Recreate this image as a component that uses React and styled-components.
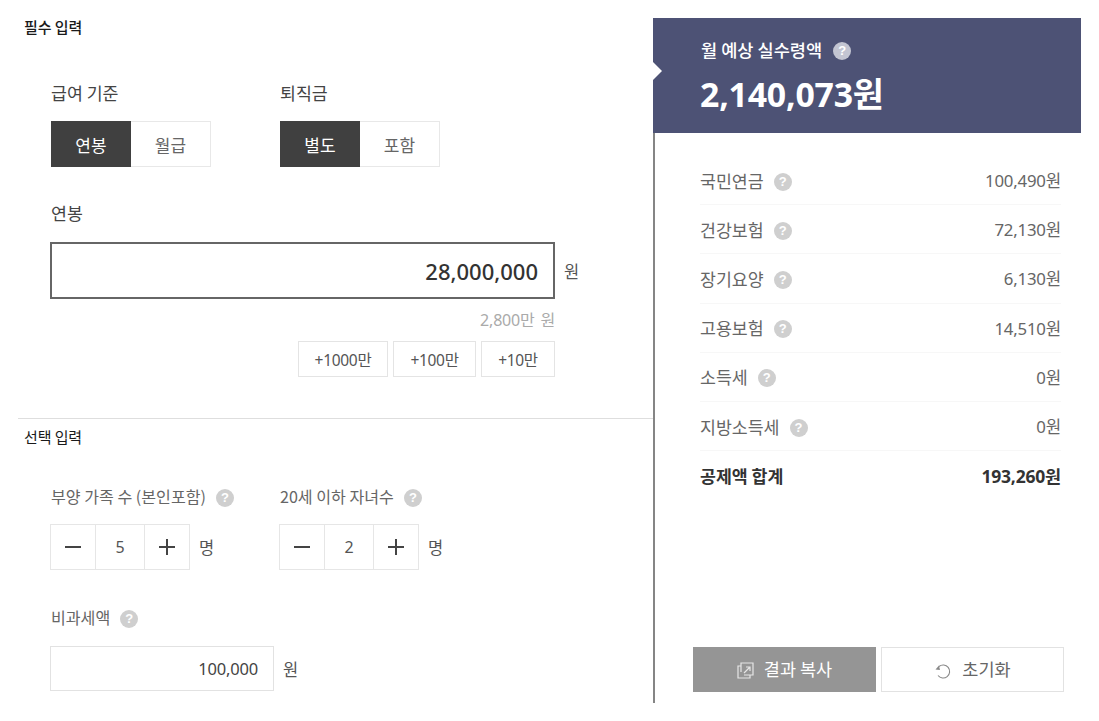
import React from "react";
import styled, { createGlobalStyle } from "styled-components";

const Global = createGlobalStyle`
  html, body { margin: 0; padding: 0; background: #fff; }
  body { font-family: "Noto Sans CJK KR", "Noto Sans", sans-serif; color: #333; }
  * { box-sizing: border-box; }
`;

const Page = styled.div`
  display: flex;
  width: 1099px;
  height: 721px;
  overflow: hidden;
  background: #fff;
`;

const Form = styled.div`
  width: 653px;
  flex: none;
  padding-left: 18px;
`;

const Section = styled.section`
  height: ${(p) => p.$height}px;
  border-bottom: ${(p) => (p.$divided ? "1px solid #dedede" : "none")};
  padding-top: ${(p) => p.$top}px;
`;

const SectionTitle = styled.h2`
  margin: 0 0 0 6px;
  font-size: 15px;
  line-height: 18px;
  font-weight: ${(p) => p.$weight || 500};
  color: #1a1a1a;
  letter-spacing: -0.1px;
`;

const Body = styled.div`
  padding-left: 33px;
  margin-top: ${(p) => p.$top}px;
`;

const Cols = styled.div`
  display: flex;
`;

const Col = styled.div`
  width: 229px;
`;

const Spacer = styled.div`
  height: ${(p) => p.$h}px;
`;

const Label = styled.div`
  display: flex;
  align-items: center;
  gap: ${(p) => p.$gap || 10}px;
  height: 20px;
  font-size: ${(p) => p.$size || 17.3}px;
  color: ${(p) => p.$color || "#444"};
  white-space: nowrap;
`;

const Help = styled.span`
  width: 18px;
  height: 18px;
  flex: none;
  margin-top: 3px;
  border-radius: 50%;
  background: ${(p) => p.$bg || "#cfcfcf"};
  color: #fff;
  font-family: "Liberation Sans", sans-serif;
  font-size: 13px;
  font-weight: 700;
  line-height: 18px;
  text-align: center;
`;

const Toggle = styled.div`
  display: flex;
  width: 160px;
  height: 46px;
  margin-top: 19px;
`;

const ToggleOption = styled.div`
  width: 80px;
  display: flex;
  align-items: center;
  justify-content: center;
  font-size: 17px;
  background: ${(p) => (p.$active ? "#404040" : "#fff")};
  color: ${(p) => (p.$active ? "#fff" : "#666")};
  border: ${(p) => (p.$active ? "none" : "1px solid #e8e8e8")};
  border-left: none;
`;

const FieldRow = styled.div`
  display: flex;
  align-items: center;
  gap: 9px;
  margin-left: -1px;
  margin-top: ${(p) => p.$top}px;
`;

const MainInput = styled.div`
  width: 505px;
  height: 57px;
  border: 2px solid #666;
  display: flex;
  align-items: center;
  justify-content: flex-end;
  padding-right: 15px;
  font-family: "Noto Sans", sans-serif;
  font-size: 22px;
  font-weight: 500;
  color: #333;
`;

const SmallInput = styled.div`
  width: 224px;
  height: 45px;
  border: 1px solid #e2e2e2;
  display: flex;
  align-items: center;
  justify-content: flex-end;
  padding-right: 15px;
  font-family: "Noto Sans", sans-serif;
  font-size: 16.5px;
  color: #444;
  letter-spacing: -0.2px;
`;

const Unit = styled.span`
  font-size: 16.5px;
  color: #555;
`;

const Hint = styled.div`
  width: 505px;
  margin: 11px 0 0 -1px;
  height: 20px;
  line-height: 20px;
  text-align: right;
  font-family: "Noto Sans", "Noto Sans CJK KR", sans-serif;
  font-size: 16px;
  color: #aaa;
  letter-spacing: -0.2px;
  word-spacing: 2px;
`;

const Quick = styled.div`
  width: 505px;
  display: flex;
  justify-content: flex-end;
  gap: 5px;
  margin: 11px 0 0 -1px;
`;

const QuickBtn = styled.div`
  width: ${(p) => p.$w}px;
  height: 36px;
  border: 1px solid #e4e4e4;
  display: flex;
  align-items: center;
  justify-content: center;
  font-family: "Noto Sans", "Noto Sans CJK KR", sans-serif;
  font-size: 15.5px;
  color: #555;
  letter-spacing: -0.3px;
`;

const Stepper = styled.div`
  display: flex;
  width: 140px;
  height: 46px;
  border: 1px solid #e6e6e6;
`;

const StepCell = styled.div`
  display: flex;
  align-items: center;
  justify-content: center;
  width: ${(p) => p.$w}px;
  border-left: ${(p) => (p.$sep ? "1px solid #e6e6e6" : "none")};
  font-family: "Noto Sans", sans-serif;
  font-size: 16px;
  color: #555;
`;

const Panel = styled.aside`
  width: 428px;
  height: 685px;
  margin-top: 18px;
  flex: none;
  display: flex;
  flex-direction: column;
  border-left: 2px solid #858585;
`;

const Hero = styled.div`
  position: relative;
  height: 115px;
  margin-left: -2px;
  background: #4d5275;
  color: #fff;
  padding: 21px 0 0 47px;
`;

const Notch = styled.span`
  position: absolute;
  left: 0;
  top: 44px;
  width: 0;
  height: 0;
  border-top: 9px solid transparent;
  border-bottom: 9px solid transparent;
  border-left: 9px solid #fff;
`;

const HeroLabel = styled.div`
  display: flex;
  align-items: center;
  gap: 11px;
  height: 20px;
  margin-left: 1px;
  font-size: 17.6px;
  font-weight: 500;
`;

const HeroValue = styled.div`
  margin-top: 13px;
  font-family: "Noto Sans", "Noto Sans CJK KR", sans-serif;
  font-size: 33.8px;
  line-height: 44px;
  font-weight: 700;
  letter-spacing: -0.2px;
`;

const Rows = styled.div`
  padding: 23px 20px 0 45px;
`;

const Row = styled.div`
  display: flex;
  align-items: center;
  justify-content: space-between;
  height: 49.2px;
  border-bottom: ${(p) => (p.$last ? "none" : "1px solid #f7f7f7")};
  font-size: 17.3px;
  color: ${(p) => (p.$strong ? "#333" : "#666")};
  font-weight: ${(p) => (p.$strong ? 700 : 400)};
`;

const RowValue = styled.span`
  font-family: "Noto Sans", "Noto Sans CJK KR", sans-serif;
  font-size: ${(p) => p.$size || 16.8}px;
  letter-spacing: -0.2px;
`;

const Actions = styled.div`
  margin-top: auto;
  margin-bottom: 11px;
  padding-left: 38px;
  display: flex;
  gap: 5px;
`;

const ActionBtn = styled.div`
  width: 183px;
  height: 45px;
  display: flex;
  align-items: center;
  justify-content: center;
  gap: 10px;
  padding-bottom: 3px;
  font-size: 17.5px;
  background: ${(p) => (p.$primary ? "#959595" : "#fff")};
  color: ${(p) => (p.$primary ? "#fff" : "#666")};
  border: ${(p) => (p.$primary ? "none" : "1px solid #e2e2e2")};
`;

const IconSlot = styled.span`
  display: flex;
  margin-top: 5px;
`;

const CopyIcon = () => (
  <IconSlot>
    <svg width="17" height="17" viewBox="0 0 17 17" fill="none" stroke="#e6e6e6" strokeWidth="1.2">
      <path d="M4 4H1v12h12v-3" />
      <path d="M4 10V1h12v12H7" />
      <path d="M7 11l6-6M9 5h4v4" />
    </svg>
  </IconSlot>
);

const UndoIcon = () => (
  <IconSlot>
    <svg width="18" height="18" viewBox="0 0 18 18" fill="none" stroke="#888" strokeWidth="1.1">
      <path d="M5 4.5A6.5 6.5 0 1 1 4 13.5" />
      <path d="M1.5 7.5L5 3.6l1 4.4z" fill="#888" stroke="none" />
    </svg>
  </IconSlot>
);

const MinusIcon = () => (
  <svg width="16" height="16" viewBox="0 0 16 16"><path d="M0 8h16" stroke="#444" strokeWidth="2" /></svg>
);

const PlusIcon = () => (
  <svg width="16" height="16" viewBox="0 0 16 16"><path d="M0 8h16M8 0v16" stroke="#444" strokeWidth="2" /></svg>
);

const StepperField = ({ value }) => (
  <FieldRow $top={18}>
    <Stepper>
      <StepCell $w={44}><MinusIcon /></StepCell>
      <StepCell $w={49} $sep>{value}</StepCell>
      <StepCell $w={45} $sep><PlusIcon /></StepCell>
    </Stepper>
    <Unit>명</Unit>
  </FieldRow>
);

const deductions = [
  ["국민연금", "100,490원"],
  ["건강보험", "72,130원"],
  ["장기요양", "6,130원"],
  ["고용보험", "14,510원"],
  ["소득세", "0원"],
  ["지방소득세", "0원"],
];

export default function App() {
  return (
    <Page>
      <Global />
      <Form>
        <Section $height={419} $divided $top={18}>
          <SectionTitle>필수 입력</SectionTitle>
          <Body $top={46}>
            <Cols>
              <Col>
                <Label>급여 기준</Label>
                <Toggle>
                  <ToggleOption $active>연봉</ToggleOption>
                  <ToggleOption>월급</ToggleOption>
                </Toggle>
              </Col>
              <Col>
                <Label>퇴직금</Label>
                <Toggle>
                  <ToggleOption $active>별도</ToggleOption>
                  <ToggleOption>포함</ToggleOption>
                </Toggle>
              </Col>
            </Cols>
            <Spacer $h={35} />
            <Label>연봉</Label>
            <FieldRow $top={20}>
              <MainInput>28,000,000</MainInput>
              <Unit>원</Unit>
            </FieldRow>
            <Hint>2,800만 원</Hint>
            <Quick>
              <QuickBtn $w={90}>+1000만</QuickBtn>
              <QuickBtn $w={83}>+100만</QuickBtn>
              <QuickBtn $w={74}>+10만</QuickBtn>
            </Quick>
          </Body>
        </Section>
        <Section $height={302} $top={9}>
          <SectionTitle $weight={400}>선택 입력</SectionTitle>
          <Body $top={40}>
            <Cols>
              <Col>
                <Label $size={16.1} $color="#666">부양 가족 수 (본인포함) <Help>?</Help></Label>
                <StepperField value="5" />
              </Col>
              <Col>
                <Label $size={16.1} $color="#666">20세 이하 자녀수 <Help>?</Help></Label>
                <StepperField value="2" />
              </Col>
            </Cols>
            <Spacer $h={37} />
            <Label $size={16.1} $color="#666">비과세액 <Help>?</Help></Label>
            <FieldRow $top={19}>
              <SmallInput>100,000</SmallInput>
              <Unit>원</Unit>
            </FieldRow>
          </Body>
        </Section>
      </Form>
      <Panel>
        <Hero>
          <Notch />
          <HeroLabel>월 예상 실수령액 <Help $bg="#c3c5d2">?</Help></HeroLabel>
          <HeroValue>2,140,073원</HeroValue>
        </Hero>
        <Rows>
          {deductions.map(([name, value]) => (
            <Row key={name}>
              <Label $color="#666">{name} <Help>?</Help></Label>
              <RowValue>{value}</RowValue>
            </Row>
          ))}
          <Row $strong $last>
            <span>공제액 합계</span>
            <RowValue $size={17.5}>193,260원</RowValue>
          </Row>
        </Rows>
        <Actions>
          <ActionBtn $primary><CopyIcon />결과 복사</ActionBtn>
          <ActionBtn><UndoIcon />초기화</ActionBtn>
        </Actions>
      </Panel>
    </Page>
  );
}
